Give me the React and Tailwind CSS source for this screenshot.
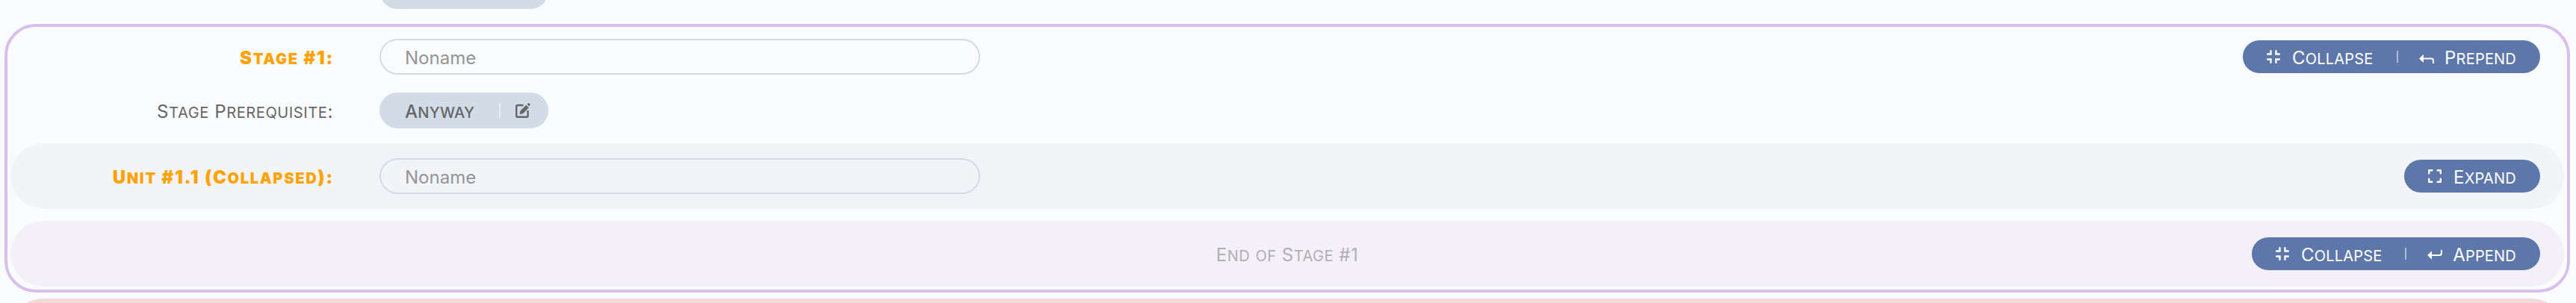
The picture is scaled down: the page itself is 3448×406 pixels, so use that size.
// Mixed-case text drawn as capitals with slightly smaller capitals for lowercase letters.
const F = ({ t }) => (
  <>
    {t.split(/([a-z]+)/).map((p, i) =>
      /[a-z]/.test(p) ? <span key={i} className="text-[20px] uppercase">{p}</span> : <span key={i}>{p}</span>
    )}
  </>
);

const Collapse = () => (
  <svg width="18" height="18" viewBox="0 0 18 18" fill="none" stroke="currentColor" strokeWidth="2.4" strokeLinecap="round">
    <path d="M5.500 1.200v4.300H1.200M12.500 1.200v4.300h4.300M5.500 16.800v-4.300H1.200M12.500 16.800v-4.300h4.300" />
  </svg>
);
const Expand = () => (
  <svg width="18" height="18" viewBox="0 0 18 18" fill="none" stroke="currentColor" strokeWidth="2.4" strokeLinejoin="round" strokeLinecap="round">
    <path d="M5.300 1.200H1.200v4.100M12.700 1.200h4.100v4.100M5.300 16.800H1.200v-4.100M12.700 16.800h4.100v-4.100" />
  </svg>
);
const Prepend = () => (
  <svg width="20" height="14" viewBox="0 0 20 14" fill="none" className="mt-1.5 -mr-0.5">
    <path d="M5 6.500h11.500q2.400 0 2.400 2.400v3.300" stroke="currentColor" strokeWidth="2" strokeLinecap="round" />
    <path d="M.6 6.500L5.500 1.700v9.600z" fill="currentColor" stroke="currentColor" strokeWidth="1" strokeLinejoin="round" />
  </svg>
);
const Append = () => (
  <svg width="20" height="14" viewBox="0 0 20 14" fill="none" className="mt-0.5 -mr-0.5">
    <path d="M5 8h11.500q2.400 0 2.400-2.400V1.800" stroke="currentColor" strokeWidth="2" strokeLinecap="round" />
    <path d="M.6 8l4.900-4.800v9.600z" fill="currentColor" stroke="currentColor" strokeWidth="1" strokeLinejoin="round" />
  </svg>
);

const Btn = ({ icon, t }) => (
  <button className="flex h-full items-center gap-4">
    {icon}
    <span className="pt-[3px] text-[24px] leading-none tracking-[0.2px]"><F t={t} /></span>
  </button>
);
const Bar = ({ children, w }) => (
  <div className={'mr-[32px] flex h-[44px] shrink-0 items-center justify-between rounded-full bg-[#5d77aa] px-8 text-white ' + w}>{children}</div>
);
const Sep = () => <span className="ml-[3px] h-4 w-0.5 bg-white/50" />;
const Label = ({ t, accent }) => (
  <div className={'w-[432px] shrink-0 pt-[3px] text-right text-[24px] leading-none ' + (accent ? 'font-black tracking-[1.7px] text-[#ffa305]' : 'tracking-[0.62px] text-[#666]')}>
    <span className={accent ? '-mr-[1px]' : ''}><F t={t} /></span>
  </div>
);
const Field = () => (
  <div className="ml-[62px] flex h-12 w-[804px] items-center rounded-full border-2 border-[#d1dce6] px-8 text-[24px] text-[#949596]">
    <span className="pt-[3px] leading-none">Noname</span>
  </div>
);

export default function App() {
  return (
    <div className="h-[406px] w-full overflow-hidden bg-[#f9fbfd] font-[Inter,sans-serif]">
      <div className="ml-[508px] h-3 overflow-hidden">
        <div className="-mt-9 h-12 w-[226px] rounded-full bg-[#d2dce6]" />
      </div>
      <div className="mt-5 ml-1.5 flex h-[360px] w-[3434px] flex-col rounded-[42px] border-4 border-[#d9bfec] px-1">
        <div className="flex h-[80px] items-center">
          <Label t="Stage #1:" accent />
          <Field />
          <div className="flex-1" />
          <Bar w="w-[398px]">
            <Btn icon={<Collapse />} t="Collapse" /><Sep /><Btn icon={<Prepend />} t="Prepend" />
          </Bar>
        </div>
        <div className="flex h-16 items-center">
          <Label t="Stage Prerequisite:" />
          <div className="ml-[62px] flex h-12 w-[226px] items-center justify-between rounded-full bg-[#d2dce6] pr-6 pl-[34px] text-[#666]">
            <span className="pt-[3px] text-[24px] leading-none font-medium tracking-[0.3px]"><F t="Anyway" /></span>
            <div className="flex items-center gap-5">
              <span className="h-5 w-0.5 bg-white/50" />
              <svg width="20" height="20" viewBox="0 0 20 20" fill="none">
                <path d="M10.500 3H2.800Q1.200 3 1.200 4.600v12.600q0 1.600 1.600 1.600H15q1.600 0 1.600-1.600V10" stroke="currentColor" strokeWidth="2.400" />
                <path d="M14.300 3.200l3 3-7 7.300-4.300 1.200 1.100-4.300z" fill="currentColor" stroke="currentColor" strokeWidth="1" strokeLinejoin="round" />
                <path d="M15.500 1.700l.9-.9q1.200-1.100 2.500 0t.2 2.600l-.9.9z" fill="currentColor" />
              </svg>
            </div>
          </div>
        </div>
        <div className="mt-3 flex h-[88px] shrink-0 items-center rounded-full bg-[#f3f4f8]">
          <Label t="Unit #1.1 (Collapsed):" accent />
          <Field />
          <div className="flex-1" />
          <Bar w="w-[182px]"><Btn icon={<Expand />} t="Expand" /></Bar>
        </div>
        <div className="mt-4 grid h-[88px] shrink-0 grid-cols-[1fr_auto_1fr] items-center rounded-full bg-[#f4f0fa]">
          <span />
          <span className="pt-[3px] text-[24px] leading-none tracking-[0.5px] text-[#b1afb4]"><F t="End of Stage #1" /></span>
          <div className="flex justify-end">
            <Bar w="w-[386px]">
              <Btn icon={<Collapse />} t="Collapse" /><Sep /><Btn icon={<Append />} t="Append" />
            </Bar>
          </div>
        </div>
      </div>
      <div className="mt-2 ml-[14px] h-[88px] w-[3418px] rounded-full bg-[#f4d9de]" />
    </div>
  );
}
